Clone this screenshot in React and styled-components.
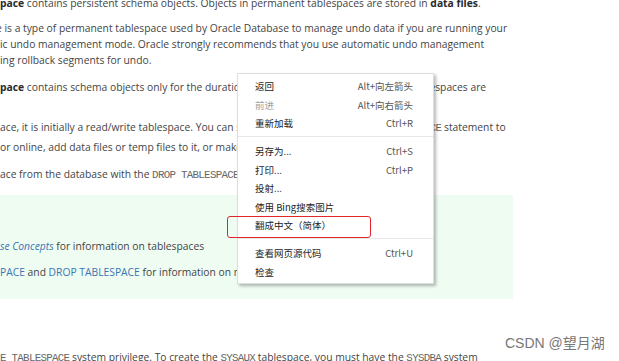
import React from "react";
import styled, { createGlobalStyle } from "styled-components";

const GlobalStyle = createGlobalStyle`
  html, body {
    margin: 0;
    padding: 0;
    background: #ffffff;
  }
  body {
    overflow: hidden;
  }
`;

const Page = styled.div`
  position: relative;
  width: 619px;
  height: 361px;
  overflow: hidden;
  background: #ffffff;
  font-family: "Open Sans", "Noto Sans", sans-serif;
  font-size: 10.3px;
  color: #444444;
`;

const Doc = styled.div`
  display: flex;
  flex-direction: column;
`;

const Para = styled.div`
  margin-top: ${(p) => p.$gap}px;
  line-height: ${(p) => p.$lh || 16}px;
  white-space: nowrap;
`;

const Line = styled.div`
  margin-left: ${(p) => p.$shift || 0}px;
`;

const Strong = styled.b`
  font-weight: 700;
  color: #2a2a2a;
`;

const Code = styled.code`
  font-family: "Liberation Mono", "DejaVu Sans Mono", monospace;
  font-size: 10.8px;
  letter-spacing: -0.7px;
  color: #666666;
`;

const Link = styled.span`
  color: #3d74b4;
  font-style: ${(p) => (p.$italic ? "italic" : "normal")};
`;

const Note = styled.div`
  margin-top: 12px;
  width: 513px;
  height: 104px;
  box-sizing: border-box;
  padding-top: 43px;
  background: #effcf2;
  display: flex;
  flex-direction: column;
  gap: 10px;
  line-height: 16px;
  white-space: nowrap;
`;

const Menu = styled.div`
  position: absolute;
  left: 237px;
  top: 73px;
  width: 197px;
  box-sizing: border-box;
  padding: 3px 0 2px;
  background: #ffffff;
  border: 1px solid #dedede;
  box-shadow: 2px 2px 3px rgba(0, 0, 0, 0.28);
  font-family: "Noto Sans CJK SC", "Noto Sans", sans-serif;
  font-size: 9.5px;
`;

const Item = styled.div`
  display: flex;
  align-items: center;
  justify-content: space-between;
  height: 18.6px;
  padding: 0 20px 0 17px;
  color: ${(p) => (p.$disabled ? "#a0a0a0" : "#222222")};
`;

const Shortcut = styled.span`
  color: #555555;
`;

const Separator = styled.div`
  height: 1px;
  margin: 3px 0 5px;
  background: #e8e8e8;
`;

const Highlight = styled.div`
  position: absolute;
  left: 227px;
  top: 216px;
  width: 144px;
  height: 22px;
  box-sizing: border-box;
  border: 1px solid #e2262a;
  border-radius: 3px;
`;

const Watermark = styled.div`
  position: absolute;
  left: 505px;
  top: 334px;
  font-family: "Liberation Sans", "Noto Sans CJK SC", sans-serif;
  font-size: 14px;
  line-height: 18px;
  color: #777777;
  white-space: nowrap;
`;

const menuItems = [
  { label: "返回", key: "Alt+向左箭头" },
  { label: "前进", key: "Alt+向右箭头", disabled: true },
  { label: "重新加载", key: "Ctrl+R" },
  "sep",
  { label: "另存为...", key: "Ctrl+S" },
  { label: "打印...", key: "Ctrl+P" },
  { label: "投射..." },
  { label: "使用 Bing搜索图片" },
  { label: "翻成中文（简体）" },
  "sep",
  { label: "查看网页源代码", key: "Ctrl+U" },
  { label: "检查" },
];

export default function App() {
  return (
    <>
      <GlobalStyle />
      <Page>
        <Doc>
          <Para $gap={-5}>
            <Line>
              <Strong>pace</Strong> contains persistent schema objects. Objects in permanent
              tablespaces are stored in <Strong>data files</Strong>.
            </Line>
          </Para>
          <Para $gap={9}>
            <Line $shift={-4}>
              e is a type of permanent tablespace used by Oracle Database to manage undo data if you
              are running your
            </Line>
            <Line>
              ic undo management mode. Oracle strongly recommends that you use automatic undo
              management
            </Line>
            <Line>ing rollback segments for undo.</Line>
          </Para>
          <Para $gap={11}>
            <Line>
              <Strong>pace</Strong> contains schema objects only for the duration of sessions.
              Objects in temporary tablespaces are
            </Line>
          </Para>
          <Para $gap={22.5} $lh={19}>
            <Line>
              ace, it is initially a read/write tablespace. You can subsequently issue the{" "}
              <Code>ALTER TABLESPACE</Code> statement to
            </Line>
            <Line>or online, add data files or temp files to it, or make it a read-only tablespace.</Line>
          </Para>
          <Para $gap={9.5}>
            <Line>
              ace from the database with the <Code>DROP TABLESPACE</Code> statement.
            </Line>
          </Para>
          <Note>
            <Line>
              <Link $italic>se Concepts</Link> for information on tablespaces
            </Line>
            <Line>
              <Link>PACE</Link> and <Link>DROP TABLESPACE</Link> for information on managing them
            </Line>
          </Note>
          <Para $gap={50}>
            <Line>
              <Code>E TABLESPACE</Code> system privilege. To create the <Code>SYSAUX</Code>{" "}
              tablespace, you must have the <Code>SYSDBA</Code> system
            </Line>
          </Para>
        </Doc>

        <Menu>
          {menuItems.map((it, i) =>
            it === "sep" ? (
              <Separator key={i} />
            ) : (
              <Item key={i} $disabled={it.disabled}>
                <span>{it.label}</span>
                {it.key && <Shortcut>{it.key}</Shortcut>}
              </Item>
            )
          )}
        </Menu>
        <Highlight />
        <Watermark>CSDN @望月湖</Watermark>
      </Page>
    </>
  );
}
